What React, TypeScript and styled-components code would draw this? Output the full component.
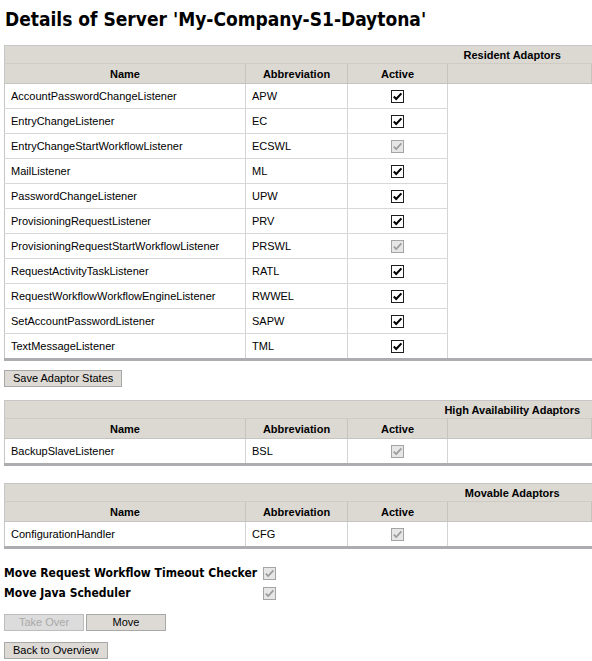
import React from 'react'
import styled, { createGlobalStyle } from 'styled-components'

const GlobalStyle = createGlobalStyle`
  html {
    overflow: hidden;
  }
  body {
    margin: 4px 0 4px 4px;
    background: #fff;
    color: #000;
    font-family: "Liberation Sans", Arial, sans-serif;
    font-size: 11px;
  }
`

const Title = styled.h1`
  margin: 4px 0 14px 1px;
  font-family: "DejaVu Sans Condensed", "DejaVu Sans", sans-serif;
  font-size: 19px;
  font-weight: bold;
  line-height: 23px;
`

const Section = styled.div<{ $gap: number }>`
  margin-top: ${p => p.$gap}px;
`

const AdaptorTable = styled.table`
  width: 100%;
  border-collapse: collapse;
  table-layout: fixed;
  border-top: 1px solid #c6c6c6;
  border-left: 1px solid #c6c6c6;
  border-bottom: 3px solid #acacb1;
`

const Col = styled.col<{ $w?: number }>`
  width: ${p => (p.$w ? p.$w + 'px' : 'auto')};
`

/* the real table is wider than the window; its centred caption sits at x=512 */
const TitleCell = styled.th`
  height: 17px;
  padding: 0 0 0 428px;
  background: #dcd9d3;
  border-bottom: 1px solid #cfccc6;
  font-size: 11px;
  font-weight: bold;
  text-align: center;
  white-space: nowrap;
`

const HeadCell = styled.th`
  height: 19px;
  padding: 0;
  background: #dcd9d3;
  border-right: 1px solid #c6c4c0;
  border-bottom: 1px solid #c6c4c0;
  font-size: 11px;
  font-weight: bold;
  text-align: center;
`

const Cell = styled.td<{ $center?: boolean }>`
  height: 24px;
  padding: 0 6px;
  border-right: 1px solid #d4d4d4;
  border-bottom: 1px solid #d8d8d8;
  text-align: ${p => (p.$center ? 'center' : 'left')};
  vertical-align: middle;
  white-space: nowrap;
`

const Filler = styled.td`
  padding: 0;
  border: none;
`

const Box = styled.span<{ $disabled?: boolean }>`
  display: inline-flex;
  align-items: center;
  justify-content: center;
  width: 13px;
  height: 13px;
  box-sizing: border-box;
  border: 1px solid ${p => (p.$disabled ? '#a4a4a4' : '#1e1e1e')};
  background: ${p => (p.$disabled ? '#e6e6e6' : '#fff')};
  vertical-align: middle;
`

const Check = ({ disabled }: { disabled?: boolean }) => (
  <Box $disabled={disabled}>
    <svg width="11" height="11" viewBox="0 0 11 11">
      <path
        d="M1.8 5.6 L4.2 8 L9.4 2.4"
        fill="none"
        stroke={disabled ? '#9a9a9a' : '#000'}
        strokeWidth={disabled ? 1.6 : 2.1}
      />
    </svg>
  </Box>
)

const Button = styled.button<{ $w?: number }>`
  height: 17px;
  width: ${p => (p.$w ? p.$w + 'px' : 'auto')};
  padding: 0 8px;
  margin: 0;
  font-family: "Liberation Sans", Arial, sans-serif;
  font-size: 11px;
  line-height: 15px;
  color: #000;
  background: #dddad5;
  border: 1px solid #a8a8a8;
  border-radius: 0;
  &:disabled {
    color: #a9a9a9;
    background: #dcdcdc;
    border-color: #bdbdbd;
  }
`

const ButtonRow = styled.div<{ $gap: number }>`
  display: flex;
  gap: 2px;
  margin-top: ${p => p.$gap}px;
`

const Settings = styled.div`
  display: grid;
  grid-template-columns: 259px 13px;
  grid-auto-rows: 20px;
  align-items: center;
  margin-top: 14px;
`

const SettingLabel = styled.span`
  font-family: "DejaVu Sans Condensed", "DejaVu Sans", sans-serif;
  font-size: 12px;
  font-weight: bold;
  white-space: nowrap;
`

type Adaptor = { name: string; abbr: string; disabled?: boolean }

const resident: Adaptor[] = [
  { name: 'AccountPasswordChangeListener', abbr: 'APW' },
  { name: 'EntryChangeListener', abbr: 'EC' },
  { name: 'EntryChangeStartWorkflowListener', abbr: 'ECSWL', disabled: true },
  { name: 'MailListener', abbr: 'ML' },
  { name: 'PasswordChangeListener', abbr: 'UPW' },
  { name: 'ProvisioningRequestListener', abbr: 'PRV' },
  { name: 'ProvisioningRequestStartWorkflowListener', abbr: 'PRSWL', disabled: true },
  { name: 'RequestActivityTaskListener', abbr: 'RATL' },
  { name: 'RequestWorkflowWorkflowEngineListener', abbr: 'RWWEL' },
  { name: 'SetAccountPasswordListener', abbr: 'SAPW' },
  { name: 'TextMessageListener', abbr: 'TML' },
]

const highAvailability: Adaptor[] = [{ name: 'BackupSlaveListener', abbr: 'BSL', disabled: true }]

const movable: Adaptor[] = [{ name: 'ConfigurationHandler', abbr: 'CFG', disabled: true }]

function Adaptors({ title, rows }: { title: string; rows: Adaptor[] }) {
  return (
    <AdaptorTable>
      <colgroup>
        <Col $w={241} />
        <Col $w={102} />
        <Col $w={100} />
        <Col />
      </colgroup>
      <thead>
        <tr>
          <TitleCell colSpan={4}>{title}</TitleCell>
        </tr>
        <tr>
          <HeadCell>Name</HeadCell>
          <HeadCell>Abbreviation</HeadCell>
          <HeadCell>Active</HeadCell>
          <HeadCell />
        </tr>
      </thead>
      <tbody>
        {rows.map((r, i) => (
          <tr key={r.abbr}>
            <Cell>{r.name}</Cell>
            <Cell>{r.abbr}</Cell>
            <Cell $center>
              <Check disabled={r.disabled} />
            </Cell>
            {i === 0 && <Filler rowSpan={rows.length} />}
          </tr>
        ))}
      </tbody>
    </AdaptorTable>
  )
}

export default function App() {
  return (
    <>
      <GlobalStyle />
      <Title>Details of Server 'My-Company-S1-Daytona'</Title>

      <Adaptors title="Resident Adaptors" rows={resident} />
      <ButtonRow $gap={9}>
        <Button>Save Adaptor States</Button>
      </ButtonRow>

      <Section $gap={13}>
        <Adaptors title="High Availability Adaptors" rows={highAvailability} />
      </Section>

      <Section $gap={17}>
        <Adaptors title="Movable Adaptors" rows={movable} />
      </Section>

      <Settings>
        <SettingLabel>Move Request Workflow Timeout Checker</SettingLabel>
        <Check disabled />
        <SettingLabel>Move Java Scheduler</SettingLabel>
        <Check disabled />
      </Settings>

      <ButtonRow $gap={11}>
        <Button $w={80} disabled>Take Over</Button>
        <Button $w={80}>Move</Button>
      </ButtonRow>

      <ButtonRow $gap={11}>
        <Button>Back to Overview</Button>
      </ButtonRow>
    </>
  )
}
